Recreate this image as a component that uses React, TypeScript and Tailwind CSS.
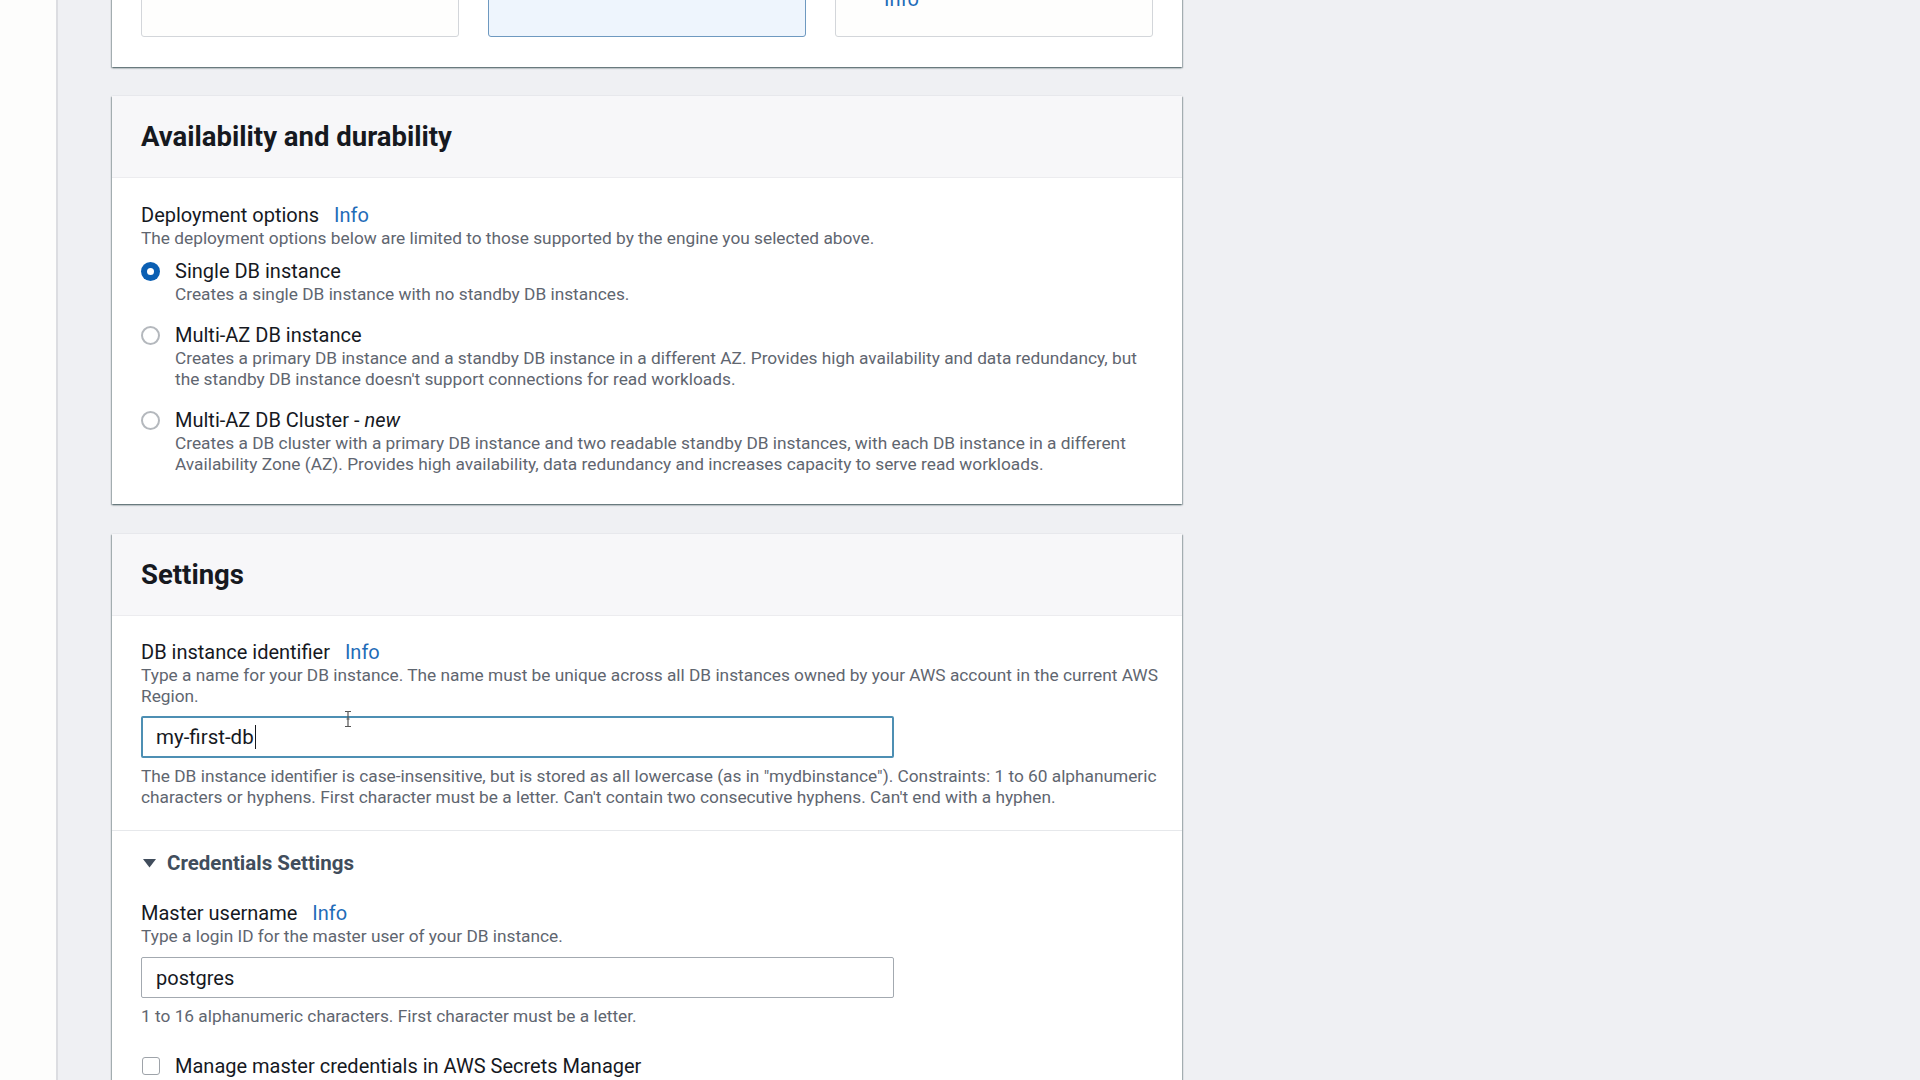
import React from "react";

function Info({ className = "" }: { className?: string }) {
  return <span className={"text-[#1f6cb8] " + className}>Info</span>;
}

function Radio({ checked }: { checked?: boolean }) {
  if (checked) {
    return (
      <span className="mt-[4px] flex h-[19px] w-[19px] shrink-0 items-center justify-center rounded-full bg-[#0b5fb3]">
        <span className="block h-[7px] w-[7px] rounded-full bg-white" />
      </span>
    );
  }
  return <span className="mt-[4px] block h-[19px] w-[19px] shrink-0 rounded-full border-2 border-[#b4b8bd] bg-white" />;
}

function RadioItem({
  checked,
  title,
  children,
}: {
  checked?: boolean;
  title: React.ReactNode;
  children: React.ReactNode;
}) {
  return (
    <div className="flex">
      <div className="w-[34px] shrink-0">
        <Radio checked={checked} />
      </div>
      <div className="flex flex-col">
        <div className="text-[20px] leading-[26px] text-[#16191f]">{title}</div>
        <div className="whitespace-nowrap text-[17.3px] leading-[21px] text-[#5f6670]">{children}</div>
      </div>
    </div>
  );
}

function Panel({ title, children }: { title: string; children: React.ReactNode }) {
  return (
    <section className="bg-white shadow-[0_1px_2px_0_rgba(0,28,36,0.45),1px_1px_1px_0_rgba(0,28,36,0.2),-1px_1px_1px_0_rgba(0,28,36,0.2)]">
      <div className="flex h-[82px] items-center border-b border-[#ececef] bg-[#f7f7f9] px-[29px]">
        <h2 className="text-[27.5px] font-bold text-[#16191f]">{title}</h2>
      </div>
      {children}
    </section>
  );
}

export default function App() {
  return (
    <div className="flex h-[1080px] w-[1920px] overflow-hidden bg-[#eff0f3] [font-family:Roboto,'Liberation_Sans',sans-serif]">
      <aside className="h-full w-[58px] shrink-0 border-r-2 border-[#dcdde1] bg-[#fdfdfc]" />
      <main className="relative pl-[54px]">
        <div className="flex w-[1070px] flex-col">
          {/* Top panel (partially visible) */}
          <section className="mt-[-100px] bg-white px-[29px] pb-[30px] shadow-[0_1px_2px_0_rgba(0,28,36,0.45),1px_1px_1px_0_rgba(0,28,36,0.2),-1px_1px_1px_0_rgba(0,28,36,0.2)]">
            <div className="grid h-[137px] grid-cols-3 gap-[29px]">
              <div className="rounded-[3px] border border-[#d3d6da] bg-[#fefefd]" />
              <div className="rounded-[3px] border border-[#6e99c0] bg-[#eef5fd]" />
              <div className="flex flex-col justify-end rounded-[3px] border border-[#d3d6da] bg-[#fefefd] pb-[24px] pl-[48px]">
                <div className="text-[20px] leading-[26px]">
                  <Info />
                </div>
              </div>
            </div>
          </section>

          {/* Availability and durability */}
          <div className="mt-[29px]">
            <Panel title="Availability and durability">
              <div className="px-[29px] pb-[29px] pt-[24px]">
                <div className="text-[20px] leading-[26px] text-[#16191f]">
                  Deployment options <Info className="ml-[10px]" />
                </div>
                <div className="whitespace-nowrap text-[17.3px] leading-[21px] text-[#5f6670]">
                  The deployment options below are limited to those supported by the engine you selected above.
                </div>
                <div className="mt-[9px] flex flex-col gap-[17px]">
                  <RadioItem checked title="Single DB instance">
                    Creates a single DB instance with no standby DB instances.
                  </RadioItem>
                  <RadioItem title="Multi-AZ DB instance">
                    Creates a primary DB instance and a standby DB instance in a different AZ. Provides high availability and data redundancy, but
                    <br />
                    the standby DB instance doesn't support connections for read workloads.
                  </RadioItem>
                  <RadioItem
                    title={
                      <>
                        Multi-AZ DB Cluster - <i>new</i>
                      </>
                    }
                  >
                    Creates a DB cluster with a primary DB instance and two readable standby DB instances, with each DB instance in a different
                    <br />
                    Availability Zone (AZ). Provides high availability, data redundancy and increases capacity to serve read workloads.
                  </RadioItem>
                </div>
              </div>
            </Panel>
          </div>

          {/* Settings */}
          <div className="mt-[30px]">
            <Panel title="Settings">
              <div className="px-[29px] pb-[22px] pt-[23px]">
                <div className="text-[20px] leading-[26px] text-[#16191f]">
                  DB instance identifier <Info className="ml-[10px]" />
                </div>
                <div className="whitespace-nowrap text-[17.3px] leading-[21px] text-[#5f6670]">
                  Type a name for your DB instance. The name must be unique across all DB instances owned by your AWS account in the current AWS
                  <br />
                  Region.
                </div>
                <div className="relative mt-[9px] flex h-[42px] w-[753px] items-center rounded-[2px] border-2 border-[#4d8fb3] bg-white pl-[13px] text-[20.5px] text-[#16191f]">
                  <span>my-first-db</span>
                  <span className="ml-px block h-[24px] w-px bg-[#16191f]" />
                  <svg
                    className="absolute left-[199px] top-[-8px]"
                    width="12"
                    height="18"
                    viewBox="0 0 12 18"
                    fill="none"
                    stroke="#555"
                    strokeWidth="1.2"
                  >
                    <path d="M3 1.5h2.2c.5 0 .8.3.8.8v13.4c0 .5.3.8.8.8H9M3 16.5h2.2c.5 0 .8-.3.8-.8M9 1.5H6.8c-.5 0-.8.3-.8.8M4.5 9h3" />
                  </svg>
                </div>
                <div className="mt-[8px] whitespace-nowrap text-[17.3px] leading-[21px] text-[#5f6670]">
                  The DB instance identifier is case-insensitive, but is stored as all lowercase (as in "mydbinstance"). Constraints: 1 to 60 alphanumeric
                  <br />
                  characters or hyphens. First character must be a letter. Can't contain two consecutive hyphens. Can't end with a hyphen.
                </div>
              </div>
              <div className="h-px bg-[#e6e8eb]" />
              <div className="px-[29px] pb-[80px] pt-[19px]">
                <div className="flex h-[26px] items-center text-[20.5px] font-bold text-[#414d5c]">
                  <svg width="13" height="9" viewBox="0 0 13 9" className="ml-[2px] mr-[11px]">
                    <path d="M0 0h13L6.5 8.5z" fill="#414d5c" />
                  </svg>
                  Credentials Settings
                </div>
                <div className="mt-[24px] text-[20px] leading-[26px] text-[#16191f]">
                  Master username <Info className="ml-[10px]" />
                </div>
                <div className="whitespace-nowrap text-[17.3px] leading-[21px] text-[#5f6670]">
                  Type a login ID for the master user of your DB instance.
                </div>
                <div className="mt-[10px] flex h-[41px] w-[753px] items-center rounded-[2px] border border-[#a3a9b0] bg-white pl-[14px] text-[20px] text-[#16191f]">
                  postgres
                </div>
                <div className="mt-[8px] whitespace-nowrap text-[17.3px] leading-[21px] text-[#5f6670]">
                  1 to 16 alphanumeric characters. First character must be a letter.
                </div>
                <div className="mt-[26px] flex h-[26px] items-center">
                  <span className="ml-px mr-[15px] block h-[18px] w-[18px] rounded-[3px] border-[1.5px] border-[#9ea3a9] bg-white" />
                  <span className="text-[20px] text-[#16191f]">Manage master credentials in AWS Secrets Manager</span>
                </div>
              </div>
            </Panel>
          </div>
        </div>
      </main>
    </div>
  );
}
